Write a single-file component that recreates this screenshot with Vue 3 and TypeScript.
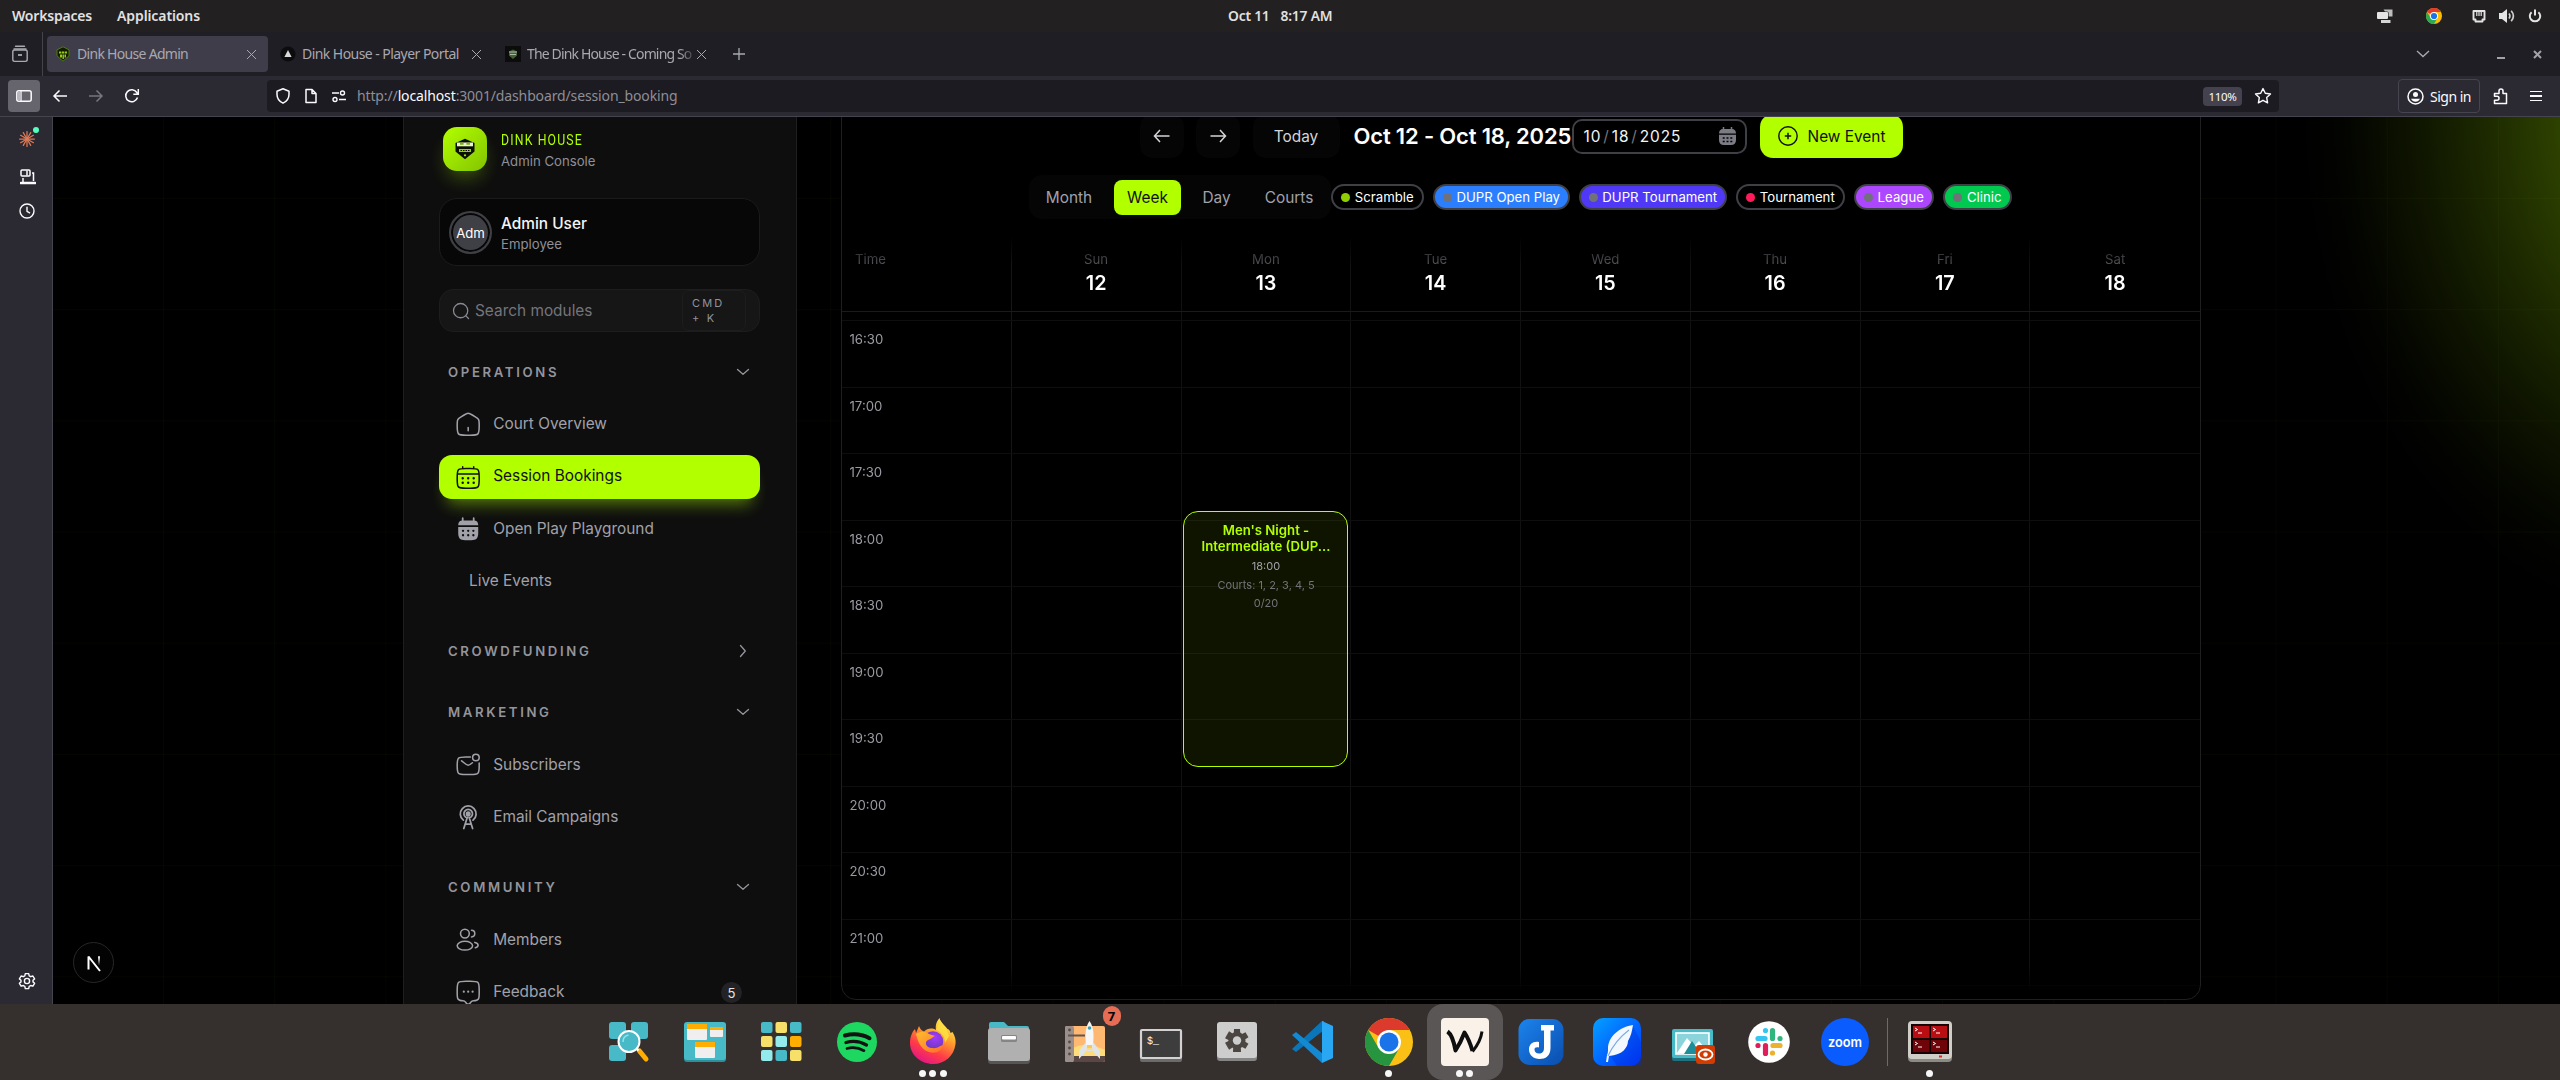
<script setup lang="ts">
interface NavItem {
  label: string
  icon: string
  active?: boolean
  badge?: number
}
interface NavGroup {
  title: string
  open: boolean
  items: NavItem[]
}
interface Chip {
  label: string
  kind: string
}

const groups: NavGroup[] = [
  {
    title: 'OPERATIONS',
    open: true,
    items: [
      { label: 'Court Overview', icon: 'home' },
      { label: 'Session Bookings', icon: 'calendar', active: true },
      { label: 'Open Play Playground', icon: 'calendar-bold' },
      { label: 'Live Events', icon: '' },
    ],
  },
  { title: 'CROWDFUNDING', open: false, items: [] },
  {
    title: 'MARKETING',
    open: true,
    items: [
      { label: 'Subscribers', icon: 'mail' },
      { label: 'Email Campaigns', icon: 'antenna' },
    ],
  },
  {
    title: 'COMMUNITY',
    open: true,
    items: [
      { label: 'Members', icon: 'users' },
      { label: 'Feedback', icon: 'chat', badge: 5 },
    ],
  },
]

const chips: Chip[] = [
  { label: 'Scramble', kind: 'scramble' },
  { label: 'DUPR Open Play', kind: 'open' },
  { label: 'DUPR Tournament', kind: 'dupr' },
  { label: 'Tournament', kind: 'tournament' },
  { label: 'League', kind: 'league' },
  { label: 'Clinic', kind: 'clinic' },
]

const days = [
  { name: 'Sun', num: 12 },
  { name: 'Mon', num: 13 },
  { name: 'Tue', num: 14 },
  { name: 'Wed', num: 15 },
  { name: 'Thu', num: 16 },
  { name: 'Fri', num: 17 },
  { name: 'Sat', num: 18 },
]

const times = ['16:30', '17:00', '17:30', '18:00', '18:30', '19:00', '19:30', '20:00', '20:30', '21:00', '']
const rays = [0, 30, 60, 90, 120, 150, 180, 210, 240, 270, 300, 330]
</script>

<template>
  <div class="desktop">
    <header class="topbar">
      <span class="tb-item ws">Workspaces</span>
      <span class="tb-item ap">Applications</span>
      <span class="clock"><span>Oct 11</span><span>8:17 AM</span></span>
      <span class="tray">
        <svg class="tr1" width="16" height="16" viewBox="0 0 16 16"><path d="M6.500 1.500h9v7h-4" fill="#bdbdbd" /><path d="M4 12h9.500v3H4z" fill="#d6d6d6" /><rect x="-.6" y="3.400" width="12.200" height="8.200" rx="1.500" fill="#222020" /><rect x="0" y="4" width="11" height="7" rx="1" fill="#e4e4e4" /></svg>
        <svg class="tr2" width="16" height="16" viewBox="0 0 48 48"><circle cx="24" cy="24" r="24" fill="#fbbc04" /><path d="M24 24L3.200 12A24 24 0 0 1 44.800 12H24z" fill="#e33b2e" /><path d="M3.200 12A24 24 0 0 0 24 48L34.400 30 24 24 13.600 30z" fill="#2da94f" /><circle cx="24" cy="24" r="12" fill="#fff" /><circle cx="24" cy="24" r="9.300" fill="#1a73e8" /></svg>
        <svg class="tr3" width="14" height="13" viewBox="0 0 14 13"><path d="M1.500 1h11v8.500h-2v2h-7v-2h-2z" fill="none" stroke="#e4e4e4" stroke-width="1.900" stroke-linejoin="round" /><path d="M4.800 2v4M7 2v4M9.200 2v4" stroke="#e4e4e4" stroke-width="1.200" /></svg>
        <svg class="tr4" width="16" height="14" viewBox="0 0 16 14"><path d="M0 4h3l5-4v14L3 10H0z" fill="#e4e4e4" /><path d="M10 4.500q1.800 2.500 0 5M12.200 1.800q4.400 5.200 0 10.400" fill="none" stroke="#cfcfcf" stroke-width="1.700" /></svg>
        <svg class="tr5" width="14" height="14" viewBox="0 0 14 14"><path d="M3.600 3.200a5.200 5.200 0 1 0 6.800 0M7 .5v6" fill="none" stroke="#e4e4e4" stroke-width="2" /></svg>
      </span>
    </header>

    <div class="tabbar">
      <div class="view-btn">
        <svg width="18" height="18" viewBox="0 0 18 18" fill="none" stroke="#a9a9b0" stroke-width="1.400"><path d="M4.500 1.200h9M3 4h12" stroke-linecap="round" /><rect x="1.800" y="5" width="14.400" height="11.400" rx="1.800" /><path d="M7 10h4" stroke-width="1.800" /></svg>
      </div>
      <div class="tab active">
        <svg width="16" height="16" viewBox="0 0 16 16"><path d="M8 .8l6 3v6L8 15.200 2 9.800v-6z" fill="#141a04" stroke="#4d7a10" stroke-width="1" /><path d="M4 5.500h2.300v2H4zM6.900 5.500h2.300v2H6.900zM9.800 5.500H12v2H9.800zM5 8.500h2v3H5zM7.500 8.500h1.400V13H7.500zM9.500 8.500H11v3H9.500z" fill="#93cc10" /></svg>
        <span class="tt t1">Dink House Admin</span><i class="x"></i>
      </div>
      <div class="tab two">
        <svg width="16" height="16" viewBox="0 0 16 16"><circle cx="8" cy="8" r="7.600" fill="#0c0c0e" /><path d="M8 4l3.600 7H4.400z" fill="#d8d8d8" /></svg>
        <span class="tt t2">Dink House - Player Portal</span><i class="x"></i>
      </div>
      <div class="tab three">
        <svg width="16" height="16" viewBox="0 0 16 16"><rect width="16" height="16" fill="#0c0c0c" /><path d="M8 3.500l4 2v4L8 13 4 9.500v-4z" fill="#46603a" /><path d="M4 6h8M5 8.500h6" stroke="#a9b8a4" stroke-width="1" /></svg>
        <span class="tt t3">The Dink House - Coming So</span><i class="x"></i>
      </div>
      <svg class="plus" width="14" height="14" viewBox="0 0 14 14"><path d="M7 1v12M1 7h12" stroke="#a9a9b0" stroke-width="1.300" /></svg>
      <span class="winbtns">
        <svg width="14" height="8" viewBox="0 0 14 8"><path d="M1 1l6 5.500L13 1" fill="none" stroke="#a9a9b0" stroke-width="1.300" /></svg>
        <i class="min"></i>
        <svg class="wx" width="9" height="9" viewBox="0 0 9 9"><path d="M1 1l7 7M8 1L1 8" stroke="#a3a2a8" stroke-width="2" /></svg>
      </span>
    </div>

    <div class="toolbar">
      <div class="sb-btn"><svg width="16" height="12" viewBox="0 0 16 12"><rect x=".8" y=".8" width="14.400" height="10.400" rx="2" fill="none" stroke="#fbfbfe" stroke-width="1.500" /><path d="M5 1v10" stroke="#fbfbfe" stroke-width="1.300" /><path d="M2 2h2.500v8H2z" fill="#b9b8bf" /></svg></div>
      <svg class="ti b" width="16" height="16" viewBox="0 0 16 16"><path d="M15 8H2M7.500 2.500L2 8l5.500 5.500" fill="none" stroke="#fbfbfe" stroke-width="1.500" /></svg>
      <svg class="ti f" width="16" height="16" viewBox="0 0 16 16"><path d="M1 8h13M8.500 2.500L14 8l-5.500 5.500" fill="none" stroke="#77767e" stroke-width="1.500" /></svg>
      <svg class="ti r" width="16" height="16" viewBox="0 0 16 16"><path d="M13.500 9.500A6 6 0 1 1 12.800 4.500L14 6M14.300 1v5.300H9.300" fill="none" stroke="#fbfbfe" stroke-width="1.500" /></svg>
      <div class="urlbar">
        <svg width="16" height="16" viewBox="0 0 16 16"><path d="M8 .8l6 2.400v3.300c0 4-2.500 7-6 8.700-3.500-1.700-6-4.700-6-8.700V3.200z" fill="none" stroke="#fbfbfe" stroke-width="1.500" stroke-linejoin="round" /></svg>
        <svg width="16" height="16" viewBox="0 0 16 16"><path d="M3 1.500h6l4 4V14.500H3zM9 1.500v4h4" fill="none" stroke="#fbfbfe" stroke-width="1.500" stroke-linejoin="round" /></svg>
        <svg width="16" height="16" viewBox="0 0 16 16"><path d="M1 5h7M8 11.500h7" stroke="#fbfbfe" stroke-width="1.600" /><circle cx="11.500" cy="5" r="2" fill="none" stroke="#fbfbfe" stroke-width="1.400" /><circle cx="4" cy="11.500" r="2" fill="none" stroke="#fbfbfe" stroke-width="1.400" /></svg>
        <span class="url">http://<b>localhost</b>:3001/dashboard/session_booking</span>
        <span class="zoom">110%</span>
        <svg class="star" width="18" height="18" viewBox="0 0 18 18"><path d="M9 1.600l2.300 4.700 5.200.7-3.800 3.600.9 5.200L9 13.300l-4.600 2.500.9-5.200L1.500 7l5.200-.7z" fill="none" stroke="#fbfbfe" stroke-width="1.400" stroke-linejoin="round" /></svg>
      </div>
      <div class="signin">
        <svg width="17" height="17" viewBox="0 0 17 17"><circle cx="8.500" cy="8.500" r="7.500" fill="none" stroke="#fbfbfe" stroke-width="1.500" /><circle cx="8.500" cy="6.500" r="2.500" fill="#fbfbfe" /><path d="M4 10.800h9q-1.500 3-4.500 3t-4.500-3z" fill="#fbfbfe" /></svg>
        <span>Sign in</span>
      </div>
      <svg class="puz" width="16" height="18" viewBox="0 0 16 18"><path d="M1.500 6.500H6V4a2 2 0 0 1 4 0v2.500h3.500V16.500h-12V13.200H4a2 2 0 0 0 0-4H1.500z" fill="none" stroke="#fbfbfe" stroke-width="1.500" stroke-linejoin="round" /></svg>
      <span class="burger"><i></i><i></i><i></i></span>
    </div>

    <div class="work">
      <aside class="ffside">
        <svg class="claude" width="22" height="22" viewBox="0 0 22 22"><g stroke="#dd7a56" stroke-width="1.250" stroke-linecap="round"><path v-for="a in rays" :key="a" d="M10 12V4.600" :transform="`rotate(${a} 10 12)`" /></g><circle cx="10" cy="12" r="1.800" fill="#dd7a56" /><circle cx="19" cy="3" r="3" fill="#54ffbd" /></svg>
        <svg class="dev" width="16" height="16" viewBox="0 0 16 16" fill="none" stroke="#fbfbfe" stroke-width="1.500"><rect x="1" y="1" width="9" height="6" rx="1" /><path d="M7 1.500v5" /><path d="M3 9v4M12 4h1.500v8" /><path d="M1 14h14" stroke-width="2.600" stroke-linecap="round" /></svg>
        <svg class="clk" width="16" height="16" viewBox="0 0 16 16" fill="none" stroke="#fbfbfe" stroke-width="1.400"><circle cx="8" cy="8" r="7" /><path d="M8 3.800V8.300l3 1.800" /></svg>
        <svg class="gear" width="18" height="18" viewBox="0 0 18 18" fill="none" stroke="#fbfbfe" stroke-width="1.400" stroke-linejoin="round"><path d="M7.300 1.600h3.400l.5 2.200 1.500.9 2.200-.7 1.700 2.900L15 8.300v1.600l1.600 1.400-1.700 2.900-2.200-.7-1.500.9-.5 2.200H7.300l-.5-2.200-1.500-.9-2.200.7-1.700-2.900L3 9.900V8.300L1.400 6.900 3.100 4l2.200.7 1.500-.9z" /><circle cx="9" cy="9" r="2.600" /></svg>
      </aside>

      <div class="viewport">
        <nav class="panel">
          <div class="brand">
            <div class="logo">
              <svg width="22" height="22" viewBox="0 0 22 22"><path d="M11 .8l9.500 4.200v8.500L11 21.200 1.500 13.500V5z" fill="#0b0f02" /><rect x="3" y="4.500" width="16" height="3.800" fill="#e8f5c8" /><path d="M6 4.800h3.600v2H6zM12.400 4.800H16v2h-3.600z" fill="#78b50a" /><path d="M5 11h12v3H5z" fill="#8fd400" /><path d="M6.500 12.500h9" stroke="#0b0f02" stroke-width="1.200" stroke-dasharray="1.500 1" /><circle cx="11" cy="17.300" r="1.100" fill="#a5ec00" /></svg>
            </div>
            <div class="btxt"><div class="bname">DINK HOUSE</div><div class="bsub">Admin Console</div></div>
          </div>
          <div class="user">
            <div class="avatar"><span>Adm</span></div>
            <div><div class="uname">Admin User</div><div class="urole">Employee</div></div>
          </div>
          <div class="search">
            <svg width="18" height="18" viewBox="0 0 24 24" fill="none" stroke="#8a8a93" stroke-width="1.700"><circle cx="11.500" cy="11.500" r="9.500" /><path d="M18.500 18.500L22 22" stroke-linecap="round" /></svg>
            <span class="ph">Search modules</span>
            <span class="kbd">CMD<br>+ K</span>
          </div>
          <section v-for="g in groups" :key="g.title" class="group">
            <div class="gh">
              <span>{{ g.title }}</span>
              <svg :class="{ shut: !g.open }" width="14" height="14" viewBox="0 0 14 14"><path d="M1.500 4.500L7 9.300l5.500-4.800" fill="none" stroke="#94949c" stroke-width="1.300" stroke-linecap="round" stroke-linejoin="round" /></svg>
            </div>
            <ul v-if="g.open" class="list">
              <li v-for="it in g.items" :key="it.label" class="row">
                <div class="pill" :class="{ on: it.active, bare: !it.icon }">
                  <svg v-if="it.icon" class="ic" viewBox="0 0 24 24" fill="none" stroke="currentColor" stroke-width="1.400" stroke-linecap="round">
                    <template v-if="it.icon === 'home'">
                      <path d="M2 12.204c0-2.289 0-3.433.519-4.381.519-.949 1.468-1.537 3.365-2.715l2-1.241C9.889 2.622 10.892 2 12 2s2.111.622 4.116 1.867l2 1.241c1.897 1.178 2.846 1.766 3.365 2.715.519.948.519 2.092.519 4.381v1.521c0 3.901 0 5.851-1.172 7.063C19.657 22 17.771 22 14 22h-4c-3.771 0-5.657 0-6.828-1.212C2 19.576 2 17.626 2 13.725z" /><path d="M12 15v3" />
                    </template>
                    <template v-else-if="it.icon === 'calendar'">
                      <path d="M2 12c0-3.771 0-5.657 1.172-6.828C4.343 4 6.229 4 10 4h4c3.771 0 5.657 0 6.828 1.172C22 6.343 22 8.229 22 12v2c0 3.771 0 5.657-1.172 6.828C19.657 22 17.771 22 14 22h-4c-3.771 0-5.657 0-6.828-1.172C2 19.657 2 17.771 2 14zM7 4V2.500M17 4V2.500M2.500 9h19" />
                      <path d="M7 13h.01M12 13h.01M17 13h.01M7 17h.01M12 17h.01M17 17h.01" stroke-width="2.200" />
                    </template>
                    <template v-else-if="it.icon === 'calendar-bold'">
                      <path d="M7 4V2M17 4V2" stroke-width="1.600" /><path d="M2 8.500C2.200 5 3.500 4 7 4h10c3.500 0 4.800 1 5 4.500z" transform="translate(1.100 0) scale(.91 1)" fill="currentColor" stroke="none" /><path d="M2 10h20v5c0 5-1.500 7-7 7H9c-5.500 0-7-2-7-7z" transform="translate(1.100 0) scale(.91 1)" fill="currentColor" stroke="none" />
                      <path d="M7.300 13.500h.01M12 13.500h.01M16.700 13.500h.01M7.300 17.500h.01M12 17.500h.01M16.700 17.500h.01" stroke="#0e0e0e" stroke-width="2.100" />
                    </template>
                    <template v-else-if="it.icon === 'mail'">
                      <path d="M22 10v3c0 3.771 0 5.157-1.172 6.328C19.657 20.500 17.771 20.500 14 20.500h-4c-3.771 0-5.657 0-6.828-1.172C2 18.157 2 16.271 2 12.500s0-5.657 1.172-6.828C4.343 4.500 6.229 4.500 10 4.500h4" /><path d="M6 8l2.159 1.800c1.837 1.530 2.755 2.294 3.841 2.294s2.004-.764 3.841-2.294" /><circle cx="19" cy="5" r="3" />
                    </template>
                    <template v-else-if="it.icon === 'antenna'">
                      <circle cx="12" cy="9" r="1.600" fill="currentColor" /><path d="M9.600 11.900a3.900 3.900 0 1 1 4.800 0M7.600 14.700a7.200 7.200 0 1 1 8.800 0M11.200 12L8 22.300M12.800 12L16 22.300M9.700 18.300h4.600" stroke-width="1.600" />
                    </template>
                    <template v-else-if="it.icon === 'users'">
                      <circle cx="9" cy="6" r="4" /><path d="M15 9a3 3 0 0 0 0-6" /><ellipse cx="9" cy="17" rx="7" ry="4" /><path d="M18 14c1.754.385 3 1.359 3 2.500 0 1.030-1.014 1.923-2.500 2.370" />
                    </template>
                    <template v-else>
                      <path d="M2 10c0-3.771 0-5.657 1.172-6.828C4.343 2 6.229 2 10 2h4c3.771 0 5.657 0 6.828 1.172C22 4.343 22 6.229 22 10v3c0 3 0 4.200-.7 5.200-.8 1.200-2.300 1.500-4.500 1.600-1.200.1-1.700.3-2.300 1.200l-1 1.200c-.7 1-2.300 1-3 0l-1-1.200c-.6-.9-1.100-1.100-2.300-1.200-2.200-.1-3.700-.4-4.500-1.600C2 17.200 2 16 2 13z" /><path d="M8 11.500h.01M12 11.500h.01M16 11.500h.01" stroke-width="2" />
                    </template>
                  </svg>
                  <span class="lbl">{{ it.label }}</span>
                  <span v-if="it.badge" class="badge">{{ it.badge }}</span>
                </div>
              </li>
            </ul>
          </section>
        </nav>

        <main class="card">
          <div class="bar1">
            <button class="nb"><svg width="18" height="18" viewBox="0 0 18 18"><path d="M16.500 9h-15M7 3L1.500 9 7 15" fill="none" stroke="#d4d4d8" stroke-width="1.500" /></svg></button>
            <button class="nb n2"><svg width="18" height="18" viewBox="0 0 18 18"><path d="M1.500 9h15M11 3l5.500 6-5.500 6" fill="none" stroke="#d4d4d8" stroke-width="1.500" /></svg></button>
            <button class="today">Today</button>
            <h2 class="range">Oct 12 - Oct 18, 2025</h2>
            <div class="date"><span>10<em>/</em>18<em>/</em>2025</span>
              <svg width="17" height="18" viewBox="0 0 17 18"><path d="M4.500 0v3M12.500 0v3" stroke="#7c7c86" stroke-width="1.500" /><path d="M0 6.500Q.2 2 4 2h9q3.800 0 4 4.500z" fill="#7c7c86" /><path d="M0 7.700h17V13q0 5-5 5H5q-5 0-5-5z" fill="#7c7c86" /><path d="M3.700 11h2M7.500 11h2M11.300 11h2M3.700 14.500h2M7.500 14.500h2M11.300 14.500h2" stroke="#000" stroke-width="1.600" /></svg>
            </div>
            <button class="new"><svg width="22" height="22" viewBox="0 0 22 22"><circle cx="11" cy="11" r="9.200" fill="none" stroke="#111" stroke-width="1.400" /><path d="M11 7.800v6.400M7.800 11h6.400" stroke="#111" stroke-width="1.500" /></svg>New Event</button>
          </div>
          <div class="bar2">
            <div class="seg"><span class="s1">Month</span><span class="s2 sel">Week</span><span class="s3">Day</span><span class="s4">Courts</span></div>
            <span v-for="c in chips" :key="c.label" class="chip" :class="c.kind"><i></i><span>{{ c.label }}</span></span>
          </div>
          <div class="week">
            <div class="cols head">
              <div class="th">Time</div>
              <div v-for="d in days" :key="d.num" class="dh"><span>{{ d.name }}</span><b>{{ d.num }}</b></div>
            </div>
            <div class="body">
              <div class="cols stub"><div v-for="n in 8" :key="n"></div></div>
              <div v-for="(t, i) in times" :key="i" class="cols slot"><div class="tm">{{ t }}</div><div v-for="d in days" :key="d.num"></div></div>
              <article class="event">
                <h3>Men's Night - Intermediate (DUP...</h3>
                <p class="e1">18:00</p>
                <p>Courts: 1, 2, 3, 4, 5</p>
                <p>0/20</p>
              </article>
            </div>
          </div>
        </main>
        <div class="next"><svg width="40" height="40" viewBox="0 0 40 40"><defs><linearGradient id="nx" x1="0" y1="0" x2="0" y2="1"><stop offset="0" stop-color="#fff" /><stop offset="1" stop-color="#fff" stop-opacity="0" /></linearGradient></defs><path d="M14.500 26.500v-13L26 28" fill="none" stroke="#fff" stroke-width="2" stroke-linejoin="bevel" /><rect x="24" y="13.300" width="2" height="9" fill="url(#nx)" /></svg></div>
      </div>
    </div>

    <footer class="dock">
      <div class="app"><svg viewBox="0 0 48 48"><g fill="#48b9c7"><rect x="4" y="4" width="17" height="17" rx="3" /><rect x="26" y="4" width="17" height="17" rx="3" /><rect x="4" y="27" width="17" height="16" rx="3" /></g><path d="M34.500 33l6.500 8" stroke="#ffad00" stroke-width="5" stroke-linecap="round" /><path d="M31 30l2.500 2.500" stroke="#fff" stroke-width="2.500" /><circle cx="24" cy="23.500" r="10.500" fill="#48b9c7" stroke="#fff" stroke-width="2" /><path d="M18 24q0-6 5.500-7" fill="none" stroke="#8fe3ea" stroke-width="1.500" /></svg></div>
      <div class="app"><svg viewBox="0 0 48 48"><rect x="3" y="5" width="42" height="39" rx="3" fill="#2c8f9c" /><rect x="3" y="4" width="42" height="38" rx="3" fill="#48b9c7" /><g fill="#f0eeee"><rect x="6" y="7" width="20" height="15" rx="1" /><rect x="29" y="10" width="13" height="9" rx="1" /><rect x="14" y="25" width="20" height="15" rx="1" /></g><g fill="#ffad00"><path d="M6 6h20v5H6zM29 9h13v3H29zM14 24h20v5H14z" /></g></svg></div>
      <div class="app"><svg viewBox="0 0 48 48"><g><rect x="4" y="4" width="11.500" height="11" rx="2" fill="#48b9c7" /><rect x="18.500" y="4" width="11.500" height="11" rx="2" fill="#f7e06a" /><rect x="33" y="4" width="11.500" height="11" rx="2" fill="#48b9c7" /><rect x="4" y="18" width="11.500" height="11" rx="2" fill="#f7e06a" /><rect x="18.500" y="18" width="11.500" height="11" rx="2" fill="#94ebeb" /><rect x="33" y="18" width="11.500" height="11" rx="2" fill="#ffad00" /><rect x="4" y="32" width="11.500" height="11" rx="2" fill="#94ebeb" /><rect x="18.500" y="32" width="11.500" height="11" rx="2" fill="#48b9c7" /><rect x="33" y="32" width="11.500" height="11" rx="2" fill="#f7e06a" /></g></svg></div>
      <div class="app"><svg viewBox="0 0 48 48"><circle cx="24" cy="24" r="20" fill="#1ed760" /><g fill="none" stroke="#121212" stroke-linecap="round"><path d="M12 17.500q13-3.500 24.500 2.700" stroke-width="4" /><path d="M13 24.500q11-3 20.500 2.500" stroke-width="3.300" /><path d="M14 30.500q9-2.300 17 2.200" stroke-width="2.700" /></g></svg></div>
      <div class="app"><svg viewBox="0 0 48 48"><defs><linearGradient id="fa" x1=".8" y1=".05" x2=".3" y2="1"><stop offset="0" stop-color="#fff44f" /><stop offset=".35" stop-color="#ffa02c" /><stop offset=".7" stop-color="#ff3b48" /><stop offset="1" stop-color="#e31587" /></linearGradient><radialGradient id="fb" cx=".6" cy=".3" r=".8"><stop offset="0" stop-color="#a53bff" /><stop offset="1" stop-color="#5b37a9" /></radialGradient><linearGradient id="fc" x1="0" y1="0" x2="1" y2="1"><stop offset="0" stop-color="#ffbd2f" /><stop offset="1" stop-color="#ff6a2a" /></linearGradient></defs><path d="M30.500 0c1 5 5 7 8 11 2 .5 2.500 2 3 4l2-1C46 18 47 22 46.500 26 45 38 36 46 24 46S1 37 1 25C1 19 3 14 6 11l1 4 3-7c1 3 3 5 5 5.500 3-3 8-4 12-1.500-1-5 1-9 3.500-12z" fill="url(#fa)" /><circle cx="24" cy="23.500" r="10.200" fill="url(#fb)" /><path d="M7 16c6-4 10-2 13 0l6 2c-3 1-3 3-7 4-4 2-2 8 4 8 6 1 8-3 12-3-3 7-9 9-15 7C11 31 9 23 7 16z" fill="url(#fc)" /><path d="M27 12c5 2 9 6 9 13l4-7-3-8-6-8z" fill="#ffdf44" opacity=".85" /></svg><span class="dots"><i></i><i></i><i></i></span></div>
      <div class="app"><svg viewBox="0 0 48 48"><path d="M4 6q0-2 2-2h13l4 4h19q2 0 2 2v8H4z" fill="#48b9c7" /><rect x="3" y="14" width="42" height="32" rx="3" fill="#555" /><rect x="3" y="10" width="42" height="33" rx="3" fill="#b0b0b0" /><rect x="16" y="17" width="16" height="7" rx="1.500" fill="#858585" /><rect x="17" y="18" width="14" height="3.500" rx="1" fill="#fff" /></svg></div>
      <div class="app"><svg viewBox="0 0 48 48"><rect x="4" y="8" width="40" height="36" rx="2" fill="#ffb872" /><path d="M12 30q12-7 32 2v7H12z" fill="#ffdc7a" /><path d="M12 38h32v4q0 2-2 2H12z" fill="#5a4642" /><rect x="4" y="8" width="9" height="36" rx="2" fill="#9b8f8b" /><path d="M7 17.500h17" stroke="#5f5552" stroke-width="2" /><g fill="#564c49"><circle cx="8.500" cy="12" r="1.400" /><circle cx="8.500" cy="24" r="1.400" /><circle cx="8.500" cy="30" r="1.400" /><circle cx="8.500" cy="36" r="1.400" /></g><path d="M28.500 3c5 7 4.500 17 3 27h-6c-1.500-10-2-20 3-27z" fill="#f6f6f6" /><path d="M25 24l-7 9v8l8-9h5l8 9v-8l-7-9-1 9h-5z" fill="#dfe3ea" /><circle cx="28.500" cy="10" r="1.800" fill="#35a3b5" /><path d="M26 27h5v3h-5z" fill="#f3c85f" /></svg><span class="count">7</span></div>
      <div class="app"><svg viewBox="0 0 48 48"><rect x="3" y="12" width="42" height="32" rx="2" fill="#6b6b6b" /><rect x="4" y="12" width="40" height="28" rx="1" fill="#3d3d3d" stroke="#d2d2d2" stroke-width="2.200" /><text x="10" y="25.500" fill="#fff" font-size="10" font-family="Liberation Mono, monospace">$_</text></svg></div>
      <div class="app"><svg viewBox="0 0 48 48"><rect x="4" y="5" width="40" height="38" rx="3" fill="#858585" /><rect x="4" y="4" width="40" height="36" rx="3" fill="#cdcdcd" /><g fill="#4c4642"><circle cx="24" cy="22.500" r="8.500" /><path v-for="a in [0, 60, 120]" :key="a" d="M21 11h6l1 23h-8z" :transform="`rotate(${a} 24 22.500)`" /></g><circle cx="24" cy="22.500" r="4.200" fill="#cdcdcd" /></svg></div>
      <div class="app"><svg viewBox="0 0 48 48"><path d="M3 31l4 3 28-22V3h-2z" fill="#0a76b9" /><path d="M3 17l4-3 27 22-1 9z" fill="#1389d1" /><path d="M33 3l11 5v32l-11 5V13z" fill="#2aa7f2" /></svg></div>
      <div class="app"><svg viewBox="0 0 48 48"><circle cx="24" cy="24" r="24" fill="#fbc015" /><path d="M24 24L3.200 12A24 24 0 0 1 44.800 12H24z" fill="#dd3a2e" /><path d="M3.200 12A24 24 0 0 0 24 48L34.400 30 24 24 13.600 30z" fill="#27943f" /><circle cx="24" cy="24" r="12" fill="#fff" /><circle cx="24" cy="24" r="9.500" fill="#1a73e8" /></svg><span class="dots"><i></i></span></div>
      <div class="app focus"><svg viewBox="0 0 48 48"><rect width="48" height="48" rx="4" fill="#faf2e8" /><path d="M6.500 13.500C10 16 13 24 14.500 32.500 17.500 28 21 21 23.500 14.500 26.500 19 29.500 26 31.500 33" fill="none" stroke="#0f0f0f" stroke-width="4" stroke-linejoin="round" /><path d="M31.500 33.500C36 28 40 21 41 13.500" fill="none" stroke="#0f0f0f" stroke-width="3" /></svg><span class="dots"><i></i><i></i></span></div>
      <div class="app"><svg viewBox="0 0 48 48"><defs><linearGradient id="jg" x1="0" y1="0" x2="1" y2="1"><stop offset="0" stop-color="#1c84ee" /><stop offset="1" stop-color="#0a4dae" /></linearGradient></defs><rect x="1.500" y="1" width="45" height="46" rx="11" fill="url(#jg)" /><path d="M24 7h13v5.500h-3.500V30c0 8-5 11-11 11S12 37 12 31.500 16 23 22 24v5.500c-3-.5-4.500 0-4.500 2.300s2 3.700 4.500 3.700c4 0 5-2.500 5-6V12.500h-3z" fill="#fff" /></svg></div>
      <div class="app"><svg viewBox="0 0 48 48"><defs><linearGradient id="qg" x1="0" y1="0" x2="1" y2="1"><stop offset="0" stop-color="#04a0ff" /><stop offset="1" stop-color="#0033ff" /></linearGradient></defs><rect width="48" height="48" rx="10" fill="url(#qg)" /><path d="M16 36l8 12h24V24L40 8z" fill="#002fd8" opacity=".35" /><path d="M40 7C27 9 15 18 15 31c0 2 0 4-1 6l-1 7 2 0 1-6c14-1 19-9 19-15 3-5 4-10 5-16z" fill="#f3f8ff" /><path d="M15 38C20 27 28 18 36 12" fill="none" stroke="#7dabe8" stroke-width="1.200" /></svg></div>
      <div class="app"><svg viewBox="0 0 48 48"><rect x="3" y="13" width="41" height="30" rx="2" fill="#1f7380" /><rect x="3" y="11" width="41" height="29" rx="2" fill="#48b9c7" /><rect x="7" y="15" width="33" height="21" fill="#8cd4dc" stroke="#fff" stroke-width="1.600" /><path d="M8 35l10-15 7 8 5-5 10 12z" fill="#fff" /><path d="M15 36l8-13 9 13z" fill="#1f8c99" /><rect x="27" y="27" width="19" height="19" rx="3" fill="#d23c00" /><ellipse cx="36.500" cy="36.500" rx="7" ry="5" fill="none" stroke="#fff" stroke-width="1.800" /><circle cx="36.500" cy="36.500" r="2.200" fill="#fff" /></svg></div>
      <div class="app"><svg viewBox="0 0 48 48"><circle cx="24" cy="24" r="20.800" fill="#fff" /><g stroke-width="5.200" stroke-linecap="round"><path d="M13 20.500h7" stroke="#36c5f0" /><path d="M20.500 12.500v.01" stroke="#36c5f0" /><path d="M27.500 12.500v8" stroke="#2eb67d" /><path d="M35 20.500v.01" stroke="#2eb67d" /><path d="M28 27.500h7" stroke="#ecb22e" /><path d="M27.500 35v.01" stroke="#ecb22e" /><path d="M20.500 27.500v8" stroke="#e01e5a" /><path d="M13 27.500v.01" stroke="#e01e5a" /></g></svg></div>
      <div class="app"><svg viewBox="0 0 48 48"><circle cx="24" cy="24" r="24" fill="#0b5cff" /><text x="7" y="28.500" fill="#fff" font-size="14" font-weight="600" font-family="Inter, sans-serif" textLength="34" lengthAdjust="spacingAndGlyphs">zoom</text></svg></div>
      <i class="dsep"></i>
      <div class="app"><svg viewBox="0 0 48 48"><rect x="2" y="5" width="44" height="39" rx="4" fill="#8b8b84" /><rect x="2" y="3" width="44" height="38" rx="4" fill="#cfcfc8" /><rect x="5" y="6" width="38" height="30" fill="#160202" /><g fill="#b80d12"><path d="M7 8h16.500v12H7zM25 8h16v12H25z" /></g><g fill="#700509"><path d="M7 22h16.500v12H7zM25 22h16v12H25z" /></g><g fill="none" stroke="#fff" stroke-width="1"><path d="M9 10l2.500 1.500L9 13M12 15h4M27 10l2.500 1.500L27 13M30 15h4M9 24l2.500 1.500L9 27M12 29h4M27 24l2.500 1.500L27 27M30 29h4" /></g><path d="M33 38.500h3" stroke="#e22" stroke-width="2" /></svg><span class="dots"><i></i></span></div>
    </footer>
  </div>
</template>

<style>
html, body { margin: 0; background: #000; overflow: hidden; }
</style>

<style scoped>
* { box-sizing: border-box; }
.desktop { width: 2560px; height: 1080px; overflow: hidden; display: flex; flex-direction: column; font-family: Inter, "Liberation Sans", sans-serif; background: #000; }
svg { display: block; flex: none; }
i, em { font-style: normal; }

.topbar { height: 32px; flex: none; background: #222020; color: #e2e1e1; display: grid; grid-template-columns: 117px 1100px 1fr auto; align-items: center; font: 600 14px/32px "Noto Sans", sans-serif; white-space: nowrap; }
.ws { padding-left: 12px; letter-spacing: -0.2px; }
.ap { letter-spacing: -0.1px; }
.clock { padding-left: 11px; display: flex; gap: 11px; font-size: 13.800px; letter-spacing: -0.2px; }
.tray { display: flex; align-items: center; padding-right: 18px; }
.tr2 { margin-left: 33px; }
.tr3 { margin-left: 30px; }
.tr4 { margin-left: 13px; }
.tr5 { margin-left: 13px; }

.tabbar { height: 44px; flex: none; background: #1f1e25; display: flex; align-items: center; font: 14px/20px "Noto Sans", sans-serif; color: #a9a8af; }
.view-btn { width: 43px; height: 44px; border-right: 1px solid #45444c; display: flex; align-items: center; padding-left: 11px; }
.tab { height: 36px; display: flex; align-items: center; border-radius: 4px; padding-left: 8px; margin-left: 4px; width: 221px; }
.tab.active { background: #3f3d49; }
.tt { margin-left: 6px; white-space: nowrap; }
.t1 { letter-spacing: -0.7px; width: 165px; }
.t2 { letter-spacing: -0.55px; width: 165px; }
.t3 { letter-spacing: -0.85px; width: 170px; -webkit-mask-image: linear-gradient(90deg, #000 90%, transparent 100%); mask-image: linear-gradient(90deg, #000 90%, transparent 100%); }
.x { width: 9px; height: 9px; margin-left: 5px; background: linear-gradient(45deg, transparent 45%, #a9a8af 45%, #a9a8af 55%, transparent 55%), linear-gradient(-45deg, transparent 45%, #a9a8af 45%, #a9a8af 55%, transparent 55%); }
.three .x { margin-left: 0; }
.plus { margin-left: 14px; }
.winbtns { margin-left: auto; display: flex; align-items: center; padding-right: 18px; }
.min { width: 8px; height: 2px; background: #a3a2a8; margin: 7px 28px 0 67px; }

.toolbar { height: 41px; flex: none; background: #2b2a33; border-bottom: 1px solid #45444e; display: flex; align-items: center; color: #fbfbfe; font-family: "Noto Sans", sans-serif; }
.sb-btn { width: 32px; height: 32px; margin-left: 8px; border-radius: 4px; background: #66656e; display: flex; align-items: center; justify-content: center; }
.ti { margin-left: 20px; }
.ti.b { margin-left: 12px; }
.urlbar { width: 2012px; height: 32px; margin-left: 127px; border-radius: 4px; background: #1c1b22; display: flex; align-items: center; padding: 0 15px 0 8px; gap: 12px; }
.url { font-size: 14px; line-height: 20px; color: #8f8e95; letter-spacing: -0.13px; margin-left: -2px; }
.url b { font-weight: 400; color: #fbfbfe; }
.zoom { margin-left: auto; width: 39px; height: 19px; border-radius: 4px; background: #44424f; font-size: 11.500px; line-height: 19px; text-align: center; letter-spacing: -0.3px; }
.star { margin-right: -8px; }
.signin { width: 82px; height: 34px; margin-left: 119px; border: 1px solid #45444f; border-radius: 4px; display: flex; align-items: center; padding-left: 8px; font-size: 14px; letter-spacing: -0.5px; white-space: nowrap; }
.signin span { margin-left: 6px; }
.puz { margin-left: 13px; }
.burger { margin-left: 21px; display: flex; flex-direction: column; gap: 3px; }
.burger i { width: 12px; height: 1.500px; background: #fbfbfe; }

.work { height: 887px; flex: none; display: flex; }
.ffside { width: 53px; background: #2b2a33; border-right: 1px solid #45444e; display: flex; flex-direction: column; }
.claude { margin: 10px 0 0 17px; }
.dev { margin: 20px 0 0 20px; }
.clk { margin: 18px 0 0 19px; }
.gear { margin: auto 0 14px 18px; }

.viewport { position: relative; width: 2507px; height: 887px; overflow: hidden; display: flex; padding-left: 350px; background:
  linear-gradient(90deg, rgba(178, 255, 0, .022) 1px, transparent 1px) 110px 0 / 111.200px 100%,
  linear-gradient(rgba(178, 255, 0, .022) 1px, transparent 1px) 0 81px / 100% 111.200px,
  radial-gradient(ellipse 400px 520px at 2647px -7px, rgba(178, 255, 0, .4) 0, rgba(178, 255, 0, .26) 35%, rgba(178, 255, 0, .165) 53%, rgba(178, 255, 0, .085) 70%, rgba(178, 255, 0, .02) 88%, transparent 100%), #000; }
.panel { width: 394px; background: #0e0e0e; border: solid #1e1e1e; border-width: 0 1px; padding: 10px 36px 0 35px; }
.brand { display: flex; height: 44px; padding-left: 4px; }
.logo { width: 44px; height: 44px; border-radius: 14px; background: linear-gradient(135deg, #b2ff00, #83c400); box-shadow: 0 11px 20px -6px rgba(178, 255, 0, .35); display: flex; align-items: center; justify-content: center; }
.btxt { margin-left: 14px; padding-top: 1px; }
.bname { height: 25px; color: #b2ff00; font: 400 15px/24px Roboto, sans-serif; letter-spacing: 1.400px; transform: scaleX(.82); transform-origin: 0 0; white-space: nowrap; }
.bsub, .urole { font-size: 13.200px; line-height: 17px; color: #8f8f98; }
.user { margin-top: 27px; height: 68px; border: 1px solid #1b1b1b; border-radius: 18px; background: #070707; display: flex; align-items: center; padding: 1px 0 0 9px; }
.avatar { width: 43px; height: 43px; border-radius: 50%; background: #3f3f46; border: 2px solid #3f3f46; box-shadow: inset 0 0 0 2px #070707; display: flex; align-items: center; justify-content: center; font-size: 13.200px; color: #fff; margin-right: 9px; }
.uname { font-size: 15.400px; line-height: 22px; font-weight: 500; color: #f4f4f5; }
.urole { line-height: 18px; }
.search { margin-top: 23px; height: 43px; border: 1px solid #1d1d1d; border-radius: 14px; background: #161616; display: flex; align-items: center; padding: 0 13px 0 12px; }
.ph { margin-left: 5px; font-size: 15.400px; color: #74747c; }
.kbd { margin-left: auto; width: 64px; height: 41px; border: 1px solid #1d1d1d; border-radius: 7px; padding: 5px 0 0 9px; font-size: 11px; line-height: 15px; letter-spacing: 2.200px; color: #92929b; }
.group { margin-bottom: 10px; }
.search + .group { margin-top: 15px; }
.gh { height: 51px; display: flex; align-items: center; justify-content: space-between; padding: 0 10px 1px 9px; font-size: 13.200px; font-weight: 600; letter-spacing: 2.640px; color: #94949c; }
.gh svg.shut { transform: rotate(-90deg); }
.list { list-style: none; margin: 0; padding: 0 0 9.300px; }
.row { height: 52.300px; display: flex; align-items: center; color: #a1a1aa; padding-top: 1px; }
.pill { width: 321px; height: 44px; border-radius: 13px; display: flex; align-items: center; padding-left: 16px; }
.pill.on { background: #b2ff00; color: #111; box-shadow: 0 13px 16px -8px rgba(178, 255, 0, .45); }
.ic { width: 26.400px; height: 26.400px; margin-right: 11.800px; }
.pill.bare { padding-left: 30px; }
.lbl { font-size: 15.400px; margin-top: -2px; }
.badge { margin-left: auto; margin-right: 18px; width: 21px; height: 21px; border-radius: 11px; background: #232326; color: #e4e4e7; font-size: 13.200px; line-height: 22px; text-align: center; }

.card { width: 1360px; height: 900px; margin: -17px 0 0 44px; border: 1px solid #1f1f1f; border-radius: 15px; background: #000; overflow: hidden; padding-top: 13px; }
.bar1, .bar2 { display: flex; justify-content: center; align-items: center; height: 44px; }
button { font: 400 15.400px Inter, sans-serif; border: 0; padding: 0; display: flex; align-items: center; justify-content: center; flex: none; }
.nb { width: 44px; height: 44px; border-radius: 13px; background: #050505; }
.n2 { margin-left: 12px; }
.today { margin-left: 13px; width: 87px; height: 44px; border-radius: 13px; background: #050505; color: #d4d4d8; }
.range { margin: 0 0 0 14px; width: 218px; font-size: 22px; font-weight: 600; color: #fff; white-space: nowrap; letter-spacing: -0.170px; }
.date { width: 175px; height: 35px; border: 2px solid #3f3f46; border-radius: 10px; display: flex; align-items: center; justify-content: space-between; padding: 0 9px 0 10px; font-size: 15.400px; letter-spacing: .9px; color: #f4f4f5; }
.date em { color: #74747c; margin: 0 2px; }
.new { margin-left: 13px; width: 143px; height: 44px; border-radius: 13px; background: #b2ff00; color: #111; gap: 9px; }
.bar2 { margin-top: 17px; justify-content: flex-start; padding-left: 187px; }
.seg { width: 302px; height: 44px; border-radius: 13px; background: #050505; display: flex; align-items: center; font-size: 15.400px; color: #a1a1aa; padding-left: 5px; }
.seg span { height: 35px; line-height: 35px; text-align: center; border-radius: 8px; }
.s1 { width: 70px; margin-right: 10px; }
.s2 { width: 67px; }
.s3 { width: 71px; }
.s4 { width: 74px; }
.seg .sel { background: #b2ff00; color: #111; }
.chip { height: 26px; border: 2px solid #3f3f46; border-radius: 13px; display: flex; align-items: center; justify-content: center; color: #fff; font-size: 13.200px; white-space: nowrap; margin-right: 9px; }
.chip i { width: 9px; height: 9px; border-radius: 5px; background: #71717a; margin-right: 4.500px; }
.scramble { width: 93px; }
.scramble i { background: #8fce00; }
.tournament { width: 109px; }
.tournament i { background: #ff1a5c; }
.open { width: 137px; background: #2b7fff; }
.dupr { width: 148px; background: #4f39f6; }
.league { width: 80px; background: #ad46ff; }
.clinic { width: 69px; background: #00c950; }

.week { margin-top: 17px; -webkit-mask-image: linear-gradient(transparent 0, #000 30px, #000 730px, transparent 756px); mask-image: linear-gradient(transparent 0, #000 30px, #000 730px, transparent 756px); }
.cols { display: grid; grid-template-columns: repeat(8, 1fr); }
.cols > div { border-right: 1px solid #111; }
.cols > div:last-child { border-right: 0; }
.cols > div:first-child { border-right-color: #161616; }
.head { height: 76px; border-bottom: 1px solid #1a1a1a; }
.th { padding: 13.500px 0 0 13px; font-size: 13.200px; line-height: 18px; color: #58585e; }
.dh { padding-top: 13.500px; text-align: center; display: flex; flex-direction: column; align-items: center; }
.dh span { font-size: 13.200px; line-height: 18px; color: #58585e; }
.dh b { margin-top: 1px; font-size: 19.800px; line-height: 28px; font-weight: 600; color: #fff; }
.body { position: relative; height: 687px; overflow: hidden; }
.stub { height: 8.300px; }
.slot { height: 66.500px; border-top: 1px solid #0e0e0e; }
.tm { padding: 9px 0 0 7.500px; font-size: 13.200px; line-height: 18px; color: #9a9aa3; }
.event { position: absolute; left: 341px; top: 199px; width: 165px; height: 256px; border: 1px solid #b2ff00; border-radius: 15px; background: rgba(178, 255, 0, .08); text-align: center; padding: 10px 8px 0 9px; }
.event h3 { margin: 0 0 3px; font-size: 13.200px; line-height: 16px; font-weight: 600; color: #b2ff00; }
.event p { margin: 0; font-size: 11px; line-height: 18.500px; color: #737379; }
.event .e1 { color: #a1a1aa; }
.next { position: absolute; left: 20px; top: 825px; width: 41px; height: 41px; border: 1.500px solid #272727; border-radius: 50%; display: flex; align-items: center; justify-content: center; background: #030303; }

.dock { height: 76px; flex: none; background: #352f2e; display: flex; align-items: center; padding-left: 590.500px; }
.app { position: relative; width: 76px; height: 76px; flex: none; display: flex; align-items: center; justify-content: center; }
.app > svg { width: 48px; height: 48px; }
.focus { background: #5a5655; border-radius: 16px; }
.dots { position: absolute; left: 0; right: 0; bottom: 3px; display: flex; justify-content: center; gap: 3.500px; }
.dots i { width: 7px; height: 7px; border-radius: 50%; background: #f7f7f7; }
.count { position: absolute; left: 56px; top: 2px; width: 18px; height: 20px; border-radius: 10px; background: #e66c54; color: #000; font: 700 13px/20px "Noto Sans", sans-serif; text-align: center; }
.dsep { width: 1px; height: 48px; background: #6f6a69; margin: 0 4px; }
</style>
